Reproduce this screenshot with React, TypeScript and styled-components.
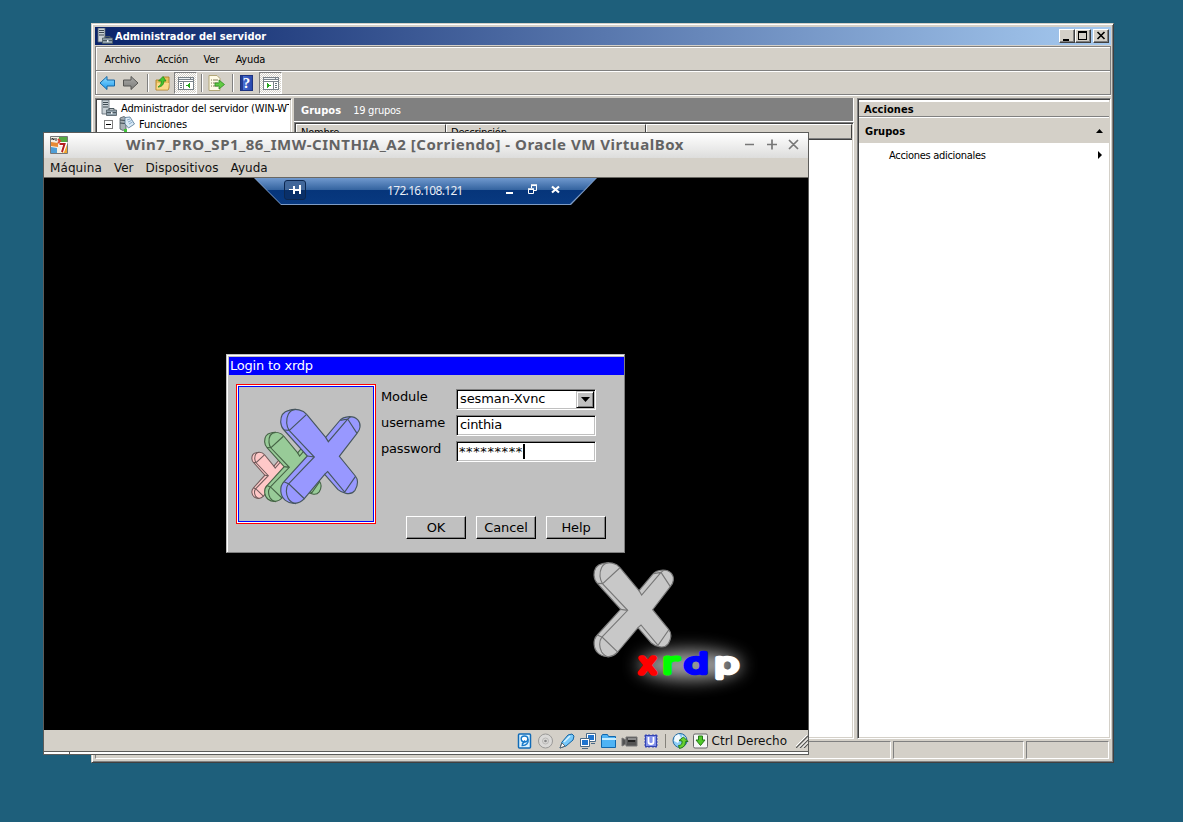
import React from "react";
import styled, { createGlobalStyle, css } from "styled-components";

const face = "#d4d0c8";
const tahoma = `"DejaVu Sans Condensed", "DejaVu Sans", "Noto Sans", sans-serif`;

const GlobalStyle = createGlobalStyle`
  * { box-sizing: border-box; }
  html, body { margin: 0; padding: 0; overflow: hidden; background: #1e5f7b; }
  svg { display: block; flex: none; }
`;

const Desktop = styled.div`
  position: relative;
  width: 1183px;
  height: 822px;
  overflow: hidden;
  background: #1e5f7b;
`;

/* ---------- Server manager ---------- */

const ServerWindow = styled.section`
  position: absolute;
  left: 91px;
  top: 23px;
  width: 1023px;
  height: 740px;
  display: flex;
  flex-direction: column;
  background: ${face};
  border: 1px solid;
  border-color: ${face} #404040 #404040 ${face};
  box-shadow: inset 1px 1px #fff, inset -1px -1px #808080;
  padding: 3px 2px 2px 3px;
  font: 11px ${tahoma};
  color: #000;
`;

const ServerTitle = styled.header`
  height: 18px;
  flex: none;
  display: flex;
  align-items: center;
  padding: 0 2px;
  background: linear-gradient(90deg, #0a246a, #a6caf0);
`;

const TitleText = styled.h1`
  margin: 0 0 0 2px;
  flex: 1;
  font: bold 11px ${tahoma};
  letter-spacing: 0.05px;
  color: #fff;
`;

const ClassicButton = styled.span<{ $gap?: number }>`
  width: 16px;
  height: 14px;
  margin-left: ${(p) => p.$gap ?? 0}px;
  background: ${face};
  border: 1px solid;
  border-color: #fff #404040 #404040 #fff;
  box-shadow: inset -1px -1px #808080;
`;

const Bars = styled.div`
  height: 49px;
  flex: none;
  margin: 1px 0;
  border: 1px solid #808080;
  box-shadow: inset 1px 1px #fff, 0 1px #fff;
`;

const MenuBar = styled.nav`
  height: 24px;
  padding: 2px 0 0 8.5px;
  display: flex;
  align-items: center;
  border-bottom: 1px solid #808080;
`;

const MenuItem = styled.span<{ $w: number }>`
  width: ${(p) => p.$w}px;
  letter-spacing: -0.15px;
  white-space: pre;
`;

const ToolBar = styled.div`
  height: 23px;
  display: flex;
  align-items: center;
  padding: 0 0 0 3px;
  border-top: 1px solid #fff;
`;

const Divider = styled.i<{ $before?: number; $after?: number }>`
  width: 2px;
  height: 18px;
  margin: 0 ${(p) => p.$after ?? 6}px 0 ${(p) => p.$before ?? 6}px;
  border-left: 1px solid #808080;
  border-right: 1px solid #fff;
`;

const Gap = styled.i<{ $w: number }>`
  width: ${(p) => p.$w}px;
`;

const Pressed = styled.span`
  width: 23px;
  height: 22px;
  display: grid;
  place-items: center;
  border: 1px solid;
  border-color: #808080 #fff #fff #808080;
  background: repeating-conic-gradient(#fff 0 25%, ${face} 0 50%) 0 0 / 2px 2px;
`;

const Panes = styled.main`
  height: 641px;
  margin-top: 2px;
  flex: none;
  display: flex;
`;

const sunken = css`
  border: 1px solid;
  border-color: #808080 #fff #fff #808080;
  box-shadow: inset 1px 1px #404040, inset -1px -1px ${face};
`;

const TreePane = styled.div`
  width: 197px;
  flex: none;
  ${sunken}
  background: #fff;
  padding: 1px 2px;
  overflow: hidden;
`;

const TreeRow = styled.div<{ $indent: number }>`
  height: 16px;
  width: 191px;
  overflow: hidden;
  display: flex;
  align-items: center;
  gap: 4px;
  padding-left: ${(p) => p.$indent}px;
  white-space: nowrap;
  letter-spacing: -0.17px;
`;

const Expander = styled.i`
  width: 9px;
  height: 9px;
  flex: none;
  margin-right: 2px;
  border: 1px solid #808080;
  background: linear-gradient(#000, #000) 50% 50% / 5px 1px no-repeat;
`;

const ListPane = styled.div`
  width: 560px;
  flex: none;
  margin-left: 2px;
  display: flex;
  flex-direction: column;
`;

const ListCaption = styled.div`
  height: 24px;
  flex: none;
  display: flex;
  align-items: center;
  gap: 12px;
  padding: 2px 0 0 7px;
  color: #fff;
  background: #808080;
  border: solid #fff;
  border-width: 0 1px 1px 0;
  letter-spacing: -0.25px;

  b {
    letter-spacing: 0.05px;
  }
`;

const List = styled.div`
  flex: 1;
  ${sunken}
  background: #fff;
  padding: 1px;
`;

const Columns = styled.div`
  height: 16px;
  display: flex;
  border-bottom: 1px solid #404040;
`;

const Column = styled.span<{ $w?: number }>`
  ${(p) => (p.$w ? `width: ${p.$w}px;` : "flex: 1;")}
  padding: 1px 0 0 4px;
  background: ${face};
  border: 1px solid;
  border-color: #fff #404040 #808080 #fff;
  letter-spacing: -0.2px;
`;

const ActionsPane = styled.aside`
  width: 254px;
  flex: none;
  margin-left: 3px;
  ${sunken}
  background: #fff;
  padding: 2px 1px;
`;

const ActionsHead = styled.div`
  height: 16px;
  padding-left: 5px;
  background: ${face};
  border-top: 1px solid #fff;
  border-bottom: 1px solid #808080;
  font-weight: bold;
  line-height: 15px;
  letter-spacing: 0.05px;
`;

const ActionsGroup = styled.div`
  height: 25px;
  margin-top: 1px;
  padding: 1px 6px 0 6px;
  display: flex;
  align-items: center;
  justify-content: space-between;
  background: ${face};
  font-weight: bold;
  letter-spacing: 0.05px;
`;

const ActionItem = styled.div`
  height: 24px;
  padding: 0 7px 0 30px;
  display: flex;
  align-items: center;
  justify-content: space-between;
  letter-spacing: -0.3px;
`;

const StatusBar = styled.footer`
  height: 18px;
  margin-top: 2px;
  flex: none;
  display: flex;
  gap: 2px;
  padding-right: 2px;
`;

const StatusCell = styled.span<{ $w?: number }>`
  ${(p) => (p.$w ? `width: ${p.$w}px;` : "flex: 1;")}
  border: 1px solid;
  border-color: #808080 #fff #fff #808080;
`;

/* ---------- VirtualBox ---------- */

const VmWindow = styled.section`
  position: absolute;
  left: 43px;
  top: 132px;
  width: 766px;
  height: 623px;
  display: flex;
  flex-direction: column;
  background: ${face};
  border: 1px solid #5c5c5a;
  font: 12px "DejaVu Sans", sans-serif;
  color: #111;
`;

const VmTitle = styled.header`
  height: 25px;
  flex: none;
  display: flex;
  align-items: center;
  padding: 0 8px 2px 6px;
  background: linear-gradient(#ffffff, #dddddc);
`;

const VmCaption = styled.h2`
  margin: -2px 0 0;
  padding-left: 58px;
  flex: 1;
  font: bold 15px "Noto Sans", "Open Sans", sans-serif;
  letter-spacing: 0.52px;
  color: #636363;
  white-space: nowrap;
`;

const VmMenu = styled.nav`
  height: 20px;
  flex: none;
  display: flex;
  align-items: center;
  gap: 12px;
  padding-left: 6px;
  border-bottom: 1px solid #6a6863;
`;

const VmMenuItem = styled.span<{ $space?: number }>`
  letter-spacing: ${(p) => p.$space ?? 0}px;
`;

const Screen = styled.div`
  position: relative;
  height: 552px;
  flex: none;
  background: #000;
`;

const VmStatus = styled.footer`
  height: 21px;
  flex: none;
  display: flex;
  align-items: center;
  justify-content: flex-end;
  gap: 5px;
`;

const HostKey = styled.span`
  margin: 0 4px 0 -2px;
  white-space: nowrap;
`;

const VmEdge = styled.div`
  height: 3px;
  border-top: 1px solid #5c5c5a;
  background: linear-gradient(90deg, transparent 25px, #5c5c5a 25px, #5c5c5a 26px, transparent 26px), #fff;
`;

/* ---------- Remote connection bar ---------- */

const ConnectionBar = styled.div`
  position: absolute;
  left: 210px;
  top: 0;
  width: 343px;
  height: 27px;
  clip-path: polygon(0 0, 100% 0, 317px 100%, 27px 100%);
  background: #7e9cc6;
`;

const ConnectionFill = styled.div`
  height: 26px;
  display: flex;
  align-items: center;
  clip-path: polygon(1px 0, 342px 0, 316px 100%, 27px 100%);
  background: linear-gradient(#7099ce 0, #33639f 12px, #06357a 12px, #083980 100%);
  color: #e8edf5;
`;

const Pin = styled.span`
  width: 22px;
  height: 20px;
  margin: -3px 0 0 30px;
  display: grid;
  place-items: center;
  border: 1px solid #0c2750;
  border-radius: 3px;
  background: linear-gradient(#41679a 0 50%, #0a3069 50%);
`;

const Address = styled.span`
  width: 112px;
  margin: -1px 0 0 81px;
  font: 12px "Noto Sans", sans-serif;
  letter-spacing: -0.67px;
`;

/* ---------- Login dialog ---------- */

const Login = styled.form`
  position: absolute;
  left: 182px;
  top: 176px;
  width: 399px;
  height: 199px;
  padding: 2px 0 0 2px;
  background: #c0c0c0;
  border: 1px solid;
  border-color: #c0c0c0 #808080 #808080 #c0c0c0;
  box-shadow: inset 1px 1px #fff;
  font: 13px "DejaVu Sans", sans-serif;
  letter-spacing: -0.1px;
  color: #000;
`;

const LoginTitle = styled.div`
  height: 18px;
  padding-left: 1px;
  line-height: 17px;
  letter-spacing: -0.22px;
  background: #0000ff;
  color: #fff;
`;

const LoginBody = styled.div`
  display: flex;
  gap: 5px;
  padding: 9px 0 0 7px;
`;

const Picture = styled.div`
  width: 140px;
  height: 140px;
  flex: none;
  border: 1px solid #f00;
  padding: 1px;
  background: #fff;
  & > div {
    height: 136px;
    border: 1px solid #00f;
    background: #c0c0c0;
  }
`;

const Fields = styled.div`
  display: flex;
  flex-direction: column;
  padding-top: 5px;
`;

const Field = styled.div`
  height: 26px;
  display: flex;
`;

const FieldLabel = styled.label<{ $space?: number }>`
  width: 75px;
  line-height: 15px;
  letter-spacing: ${(p) => p.$space ?? -0.1}px;
`;

const Input = styled.div`
  width: 140px;
  height: 21px;
  padding: 0 0 0 2px;
  display: flex;
  line-height: 18px;
  background: #fff;
  border: 1px solid;
  border-color: #808080 #fff #fff #808080;
  box-shadow: inset 1px 1px #000, inset -1px -1px #c0c0c0;
`;

const Value = styled.span<{ $space?: number }>`
  flex: 1;
  padding-left: 1px;
  letter-spacing: ${(p) => p.$space ?? -0.1}px;
`;

const Secret = styled.span`
  padding-left: 0;
  line-height: 19px;
  width: 64px;
  letter-spacing: 0.6px;
  white-space: nowrap;
`;

const Caret = styled.i`
  width: 2px;
  height: 15px;
  margin-top: 2px;
  background: #000;
`;

const DropButton = styled.span`
  width: 18px;
  height: 17px;
  margin: 1px 1px 0 0;
  display: grid;
  place-items: center;
  background: #c0c0c0;
  border: 1px solid;
  border-color: #c0c0c0 #000 #000 #c0c0c0;
  box-shadow: inset 1px 1px #fff, inset -1px -1px #808080;
`;

const Buttons = styled.div`
  display: flex;
  gap: 10px;
  margin: 49px 0 0 25px;
`;

const PushButton = styled.span`
  width: 60px;
  height: 23px;
  line-height: 21px;
  text-align: center;
  background: #c0c0c0;
  border: 1px solid;
  border-color: #fff #000 #000 #fff;
  box-shadow: inset -1px -1px #808080;
`;

const Brand = styled.svg`
  position: absolute;
  left: 536px;
  top: 372px;
`;

const BrandLetter = styled.text<{ $color: string }>`
  font: 200 82px "DejaVu Sans", sans-serif;
  fill: ${(p) => p.$color};
  stroke: ${(p) => p.$color};
  stroke-width: 5.8px;
  stroke-linejoin: round;
  stroke-linecap: round;
  vector-effect: non-scaling-stroke;
`;

/* ---------- Drawings ---------- */

function ServerIcon({ size = 16 }: { size?: number }) {
  return (
    <svg width={size} height={size} viewBox="0 0 16 16">
      <path d="M1 0h7v14H1z" fill="#c9d1d6" stroke="#59666e" strokeWidth=".8" />
      <path d="M2 2.500h5M2 4.500h5M2 7h5" stroke="#3f4b53" />
      <path d="M5.500 10h10v5.500h-10z" fill="#8fa0ab" stroke="#4b5961" strokeWidth=".8" />
      <path d="M8 10V8.500h5V10M6 12.500h9" fill="none" stroke="#4b5961" />
      <path d="M10 12h1.500v2H10z" fill="#eef3f5" />
    </svg>
  );
}

function RolesIcon() {
  return (
    <svg width="16" height="16" viewBox="0 0 16 16">
      <path d="M1 2l4-1.500L7 2v11l-3 1.500L1 13z" fill="#a7afb4" stroke="#4c585e" strokeWidth=".8" />
      <path d="M1 4l5 .5M1 7l5 .5" stroke="#3f4b53" />
      <path d="M6 1.500l5-.5 4.500 7-6 4L6 8z" fill="#dcebf7" stroke="#4e7392" strokeWidth=".8" />
      <path d="M8 4l3-1M9 6l3.500-1.500M10 8l3.500-2" stroke="#7fa4c4" strokeWidth=".9" />
      <path d="M5 13h3v3H5z" fill="#3fc43a" />
    </svg>
  );
}

function ArrowIcon({ forward = false }: { forward?: boolean }) {
  return (
    <svg width="17" height="16" viewBox="0 0 17 16">
      <defs>
        <linearGradient id={forward ? "af" : "ab"} x2="0" y2="1">
          <stop stopColor={forward ? "#a9a9a7" : "#8fdcff"} />
          <stop offset="1" stopColor={forward ? "#7d7d7b" : "#1f9bee"} />
        </linearGradient>
      </defs>
      <path
        transform={forward ? "matrix(-1 0 0 1 17 0)" : undefined}
        d="M1 8L8 1.500V5h7.500v6H8v3.500z"
        fill={`url(#${forward ? "af" : "ab"})`}
        stroke={forward ? "#555553" : "#1667a5"}
      />
    </svg>
  );
}

function FolderUpIcon() {
  return (
    <svg width="16" height="16" viewBox="0 0 16 16">
      <path d="M1 5h6l1-3h6v11l-1 2H1z" fill="#e9bf5c" stroke="#b07f26" strokeWidth=".9" />
      <path d="M2 8h12l-1 6.500H1.500z" fill="#fbd98a" />
      <path d="M3 12c2.500-1.500 3.500-3 3.300-6H3.500L8 1.500 11 6H8.800C9 9 7 12 3 12z" fill="#47c52f" stroke="#258a19" strokeWidth=".8" />
    </svg>
  );
}

function PaneIcon({ right = false }: { right?: boolean }) {
  return (
    <svg width="16" height="14" viewBox="0 0 16 14" shapeRendering="crispEdges">
      <path d="M0 1h16v13H0z" fill="#79828a" />
      <path d="M1 2h11v1H1zM13 2h2v1h-2z" fill="#eef1f3" />
      <path d="M1 4h14v1H1zM1 6h14v7H1z" fill="#fff" />
      <path d={right ? "M10 6h1v7h-1z" : "M5 6h1v7H5z"} fill="#79828a" />
      <path d={right ? "M12 7h2v1h-2zm0 2h2v1h-2zm0 2h2v1h-2z" : "M2 7h2v1H2zm0 2h2v1H2zm0 2h2v1H2z"} fill="#66747e" />
      <path d={right ? "M4 7l4 2.500L4 12z" : "M12 7L8 9.500l4 2.500z"} fill="#24a51d" />
    </svg>
  );
}

function ExportIcon() {
  return (
    <svg width="17" height="16" viewBox="0 0 17 16">
      <path d="M1 .5h8l3 3v12H1z" fill="#fffbe7" stroke="#b3a778" />
      <path d="M3 5h1m1 0h5M3 8h1m1 0h5M3 11h1m1 0h5" stroke="#817859" />
      <path d="M7 8h4V5l5.500 4.500L11 14v-3H7z" fill="#62cb43" stroke="#2f8c25" strokeWidth=".8" />
    </svg>
  );
}

const HelpIcon = styled.span`
  width: 13px;
  height: 16px;
  background: linear-gradient(90deg, #233d93 2px, #4a6fd2 2px, #2747ad);
  border: 1px solid #1d3380;
  color: #fff;
  font: bold 15px/14px "Liberation Serif", serif;
  text-align: center;
`;

function VmLogo() {
  return (
    <svg width="18" height="18" viewBox="0 0 18 18">
      <path d="M.5.5h17v17H.5z" fill="#f4efe3" stroke="#777" />
      <path d="M1 6l7 1v4l-7-1z" fill="#e98a34" />
      <path d="M1 11l6 1v5H1z" fill="#4f9ed6" />
      <path d="M9 1h8v7c-3 1-5-1-8 0z" fill="#55a942" />
      <path d="M12 9h5v8h-5z" fill="#f0a52c" />
      <path d="M2 4V2l2 2V2M6 2v3" stroke="#333" fill="none" />
      <path d="M9 8h6l-3 8" stroke="#fff" strokeWidth="4" fill="none" />
      <path d="M9.500 8h5l-2.500 8" stroke="#b51f20" strokeWidth="2" fill="none" />
      <path d="M8 3l2 2-2 2" stroke="#d84632" strokeWidth="2" fill="none" />
    </svg>
  );
}

function VmControls() {
  return (
    <svg width="56" height="14" viewBox="0 0 56 14" stroke="#777" strokeWidth="1.700" fill="none">
      <path d="M1 6.500h9M23 6.500h10M28 1.500v10M45 2l9 9m0-9l-9 9" />
    </svg>
  );
}

function VmStatusIcons() {
  return (
    <svg width="192" height="18" viewBox="0 0 192 18">
      <rect x="1.500" y="2" width="12" height="14" rx="1" fill="#ddf3ff" stroke="#116bb7" strokeWidth="1.500" />
      <ellipse cx="7.500" cy="7" rx="3.300" ry="3" fill="#fff" stroke="#1679ca" strokeWidth="1.400" />
      <path d="M11 7c1 4-2 7-6.500 6.500M5 12.500l3-4" fill="none" stroke="#1679ca" strokeWidth="1.400" />
      <circle cx="28.500" cy="9" r="7" fill="#dad9d7" stroke="#9a9997" />
      <circle cx="28.500" cy="9" r="3" fill="none" stroke="#b9b8b6" />
      <circle cx="28.500" cy="9" r="1.300" fill="#888" />
      <path d="M43 16l2-6 6-7 4-1 2 2-1 4-7 6z" fill="#76c8fa" stroke="#1263a1" />
      <path d="M43 16l2-5 3 3z" fill="#fff" stroke="#555" strokeWidth=".8" />
      <path d="M47 10l6-6" stroke="#d8f3ff" strokeWidth="1.500" />
      <path d="M69.500 1.500h9v8h-9z" fill="#fff" stroke="#4a6a88" />
      <path d="M71 3h6v5h-6z" fill="#1f74cf" />
      <path d="M63.500 6.500h9v8h-9z" fill="#fff" stroke="#4a6a88" />
      <path d="M65 8h6v5h-6z" fill="#1f74cf" />
      <path d="M65 16.500h6M74 11.500h4" stroke="#4a6a88" />
      <path d="M84.500 15.500V4l1-1.500h5l1 2h7v11z" fill="#4fb3f4" stroke="#1167ad" />
      <path d="M85 7h14" stroke="#c6ecff" strokeWidth="2" />
      <path d="M105 6l4 2v4l-4 2zM109 5h11v9h-11z" fill="#535353" stroke="#777" />
      <path d="M111 7h8" stroke="#c7c7c7" />
      <path d="M111 9h7" stroke="#222" strokeWidth="2" />
      <path d="M127 4h14M127 7h14M127 10h14M127 13h14M129 2v14M132 2v14M136 2v14M139 2v14" stroke="#4655c1" />
      <rect x="128.500" y="3.500" width="11" height="11" fill="#8290eb" stroke="#3344b0" />
      <path d="M131.500 5v5q0 2 2.500 2t2.500-2V5" fill="none" stroke="#fff" strokeWidth="1.800" />
      <path d="M148.500 2v14" stroke="#85827b" />
      <circle cx="163" cy="8.500" r="7" fill="#8bcdf6" stroke="#286a9c" />
      <path d="M158 4l4-2 2 4-3 5-4-2zM165 3l4 3-3 3z" fill="#f1faff" />
      <path d="M162 8.500L166.500 5l4.500 4.500h-2.500c0 4-2 6-6 7l-1-3c2.500 0 4-1.500 3.500-4.500z" fill="#69d12e" stroke="#247a1c" />
      <rect x="176.500" y="2" width="14" height="14" rx="1.500" fill="#f6f6f6" stroke="#666" />
      <path d="M181.500 4h4v4h2.500l-4.500 5.500L179 8h2.500z" fill="#4fc928" stroke="#257b17" />
    </svg>
  );
}

interface CrossProps {
  fill: string;
  stroke: string;
  transform?: string;
  weight?: number;
}

// The logo's block letter: silhouette first, then the edges of its front face.
function Cross({ fill, stroke, transform, weight = 3.4 }: CrossProps) {
  return (
    <g transform={transform} fill={fill} stroke={stroke} strokeWidth={weight}>
      <path d="M167 216C167 196 177 184 192 181C212 175 234 179 245 193L302 262L343 213Q352 201 374 200C396 200 407 215 405 231Q404 241 396 250L343 319L391 378C401 390 398 407 390 421Q380 434 363 430Q348 427 339 419L299 373L238 446C222 464 197 464 181 451C165 438 162 410 177 395L247 318L177 240Q168 231 167 216Z" />
      <path
        fill="none"
        d="M212 178C190 180 184 201 185 219Q186 232 193 242L268 321L190 402C181 414 183 433 190 446Q198 459 213 461M247 318L268 321M177 240L193 241L244 194M177 395L192 402L239 447M302 262L310 275L368 207L346 211M368 207L396 250M299 373L308 365L359 426L391 380M368 207L376 201"
      />
    </g>
  );
}

function XrdpPicture() {
  return (
    <svg width="134" height="134" viewBox="42 111 402 402">
      <Cross fill="#ffc8c8" stroke="#725c5c" weight={6.5} transform="translate(80 307) scale(.49) translate(-166 -178)" />
      <Cross fill="#98cb98" stroke="#456345" weight={4.5} transform="translate(118 247) scale(.735) translate(-166 -178)" />
      <Cross fill="#9898ff" stroke="#46565f" />
    </svg>
  );
}

const brandLetters = [
  { char: "x", x: 176, stretch: 1.07, color: "#f00" },
  { char: "r", x: 247, stretch: 1.4, color: "#0f0" },
  { char: "d", x: 311, stretch: 1.45, color: "#00f" },
  { char: "p", x: 402, stretch: 1.47, color: "#fff" },
];

function XrdpBrand() {
  return (
    <Brand width="200" height="150" viewBox="0 0 600 450">
      <defs>
        <filter id="halo" x="-60%" y="-150%" width="220%" height="400%">
          <feGaussianBlur stdDeviation="26" />
        </filter>
      </defs>
      <ellipse cx="330" cy="345" rx="155" ry="44" fill="#a0a0a0" filter="url(#halo)" />
      <Cross fill="#c8c8c8" stroke="#777" transform="translate(-125 -140)" />
      {brandLetters.map((l) => (
        <BrandLetter key={l.char} $color={l.color} transform={`translate(${l.x} 368) scale(${l.stretch} 1)`}>
          {l.char}
        </BrandLetter>
      ))}
    </Brand>
  );
}

/* ---------- Composition ---------- */

function ServerManager() {
  return (
    <ServerWindow>
      <ServerTitle>
        <ServerIcon />
        <TitleText>Administrador del servidor</TitleText>
        <ClassicButton>
          <svg width="14" height="12"><path d="M3 9h6v2H3z" fill="#000" /></svg>
        </ClassicButton>
        <ClassicButton>
          <svg width="14" height="12" shapeRendering="crispEdges"><path d="M2 1h9v9H2zM3 3v6h7V3z" fillRule="evenodd" /></svg>
        </ClassicButton>
        <ClassicButton $gap={2}>
          <svg width="14" height="12"><path d="M3.500 2l7 7m0-7l-7 7" stroke="#000" strokeWidth="1.600" /></svg>
        </ClassicButton>
      </ServerTitle>
      <Bars>
        <MenuBar>
          <MenuItem $w={52}>Archivo</MenuItem>
          <MenuItem $w={47}>Acción</MenuItem>
          <MenuItem $w={32}>Ver</MenuItem>
          <MenuItem $w={40}>Ayuda</MenuItem>
        </MenuBar>
        <ToolBar>
          <ArrowIcon />
          <Gap $w={6} />
          <ArrowIcon forward />
          <Divider $before={8} />
          <FolderUpIcon />
          <Gap $w={3} />
          <Pressed><PaneIcon /></Pressed>
          <Divider $before={4} $after={5} />
          <ExportIcon />
          <Divider $before={7} />
          <HelpIcon>?</HelpIcon>
          <Gap $w={6} />
          <Pressed><PaneIcon right /></Pressed>
        </ToolBar>
      </Bars>
      <Panes>
        <TreePane>
          <TreeRow $indent={3}><ServerIcon />Administrador del servidor (WIN-WT</TreeRow>
          <TreeRow $indent={6}><Expander /><RolesIcon />Funciones</TreeRow>
        </TreePane>
        <ListPane>
          <ListCaption><b>Grupos</b><span>19 grupos</span></ListCaption>
          <List>
            <Columns>
              <Column $w={150}>Nombre</Column>
              <Column $w={200}>Descripción</Column>
              <Column />
            </Columns>
          </List>
        </ListPane>
        <ActionsPane>
          <ActionsHead>Acciones</ActionsHead>
          <ActionsGroup>
            Grupos
            <svg width="7" height="4"><path d="M0 4l3.500-4L7 4z" /></svg>
          </ActionsGroup>
          <ActionItem>
            Acciones adicionales
            <svg width="4" height="8"><path d="M0 0l4 4-4 4z" /></svg>
          </ActionItem>
        </ActionsPane>
      </Panes>
      <StatusBar>
        <StatusCell />
        <StatusCell $w={131} />
        <StatusCell $w={83} />
      </StatusBar>
    </ServerWindow>
  );
}

function LoginDialog() {
  return (
    <Login>
      <LoginTitle>Login to xrdp</LoginTitle>
      <LoginBody>
        <Picture><div><XrdpPicture /></div></Picture>
        <Fields>
          <Field>
            <FieldLabel>Module</FieldLabel>
            <Input>
              <Value>sesman-Xvnc</Value>
              <DropButton><svg width="9" height="5"><path d="M0 0h9L4.500 5z" /></svg></DropButton>
            </Input>
          </Field>
          <Field>
            <FieldLabel>username</FieldLabel>
            <Input><Value $space={-0.3}>cinthia</Value></Input>
          </Field>
          <Field>
            <FieldLabel $space={-0.2}>password</FieldLabel>
            <Input><Secret>*********</Secret><Caret /></Input>
          </Field>
          <Buttons>
            <PushButton>OK</PushButton>
            <PushButton>Cancel</PushButton>
            <PushButton>Help</PushButton>
          </Buttons>
        </Fields>
      </LoginBody>
    </Login>
  );
}

function VirtualMachine() {
  return (
    <VmWindow>
      <VmTitle>
        <VmLogo />
        <VmCaption>Win7_PRO_SP1_86_IMW-CINTHIA_A2 [Corriendo] - Oracle VM VirtualBox</VmCaption>
        <VmControls />
      </VmTitle>
      <VmMenu>
        <VmMenuItem $space={0.1}>Máquina</VmMenuItem>
        <VmMenuItem>Ver</VmMenuItem>
        <VmMenuItem $space={0.08}>Dispositivos</VmMenuItem>
        <VmMenuItem>Ayuda</VmMenuItem>
      </VmMenu>
      <Screen>
        <ConnectionBar>
          <ConnectionFill>
            <Pin>
              <svg width="12" height="10" fill="#fff"><path d="M0 4h4V1h2v3h4V0h2v9h-2V6H6v3H4V5H0z" /></svg>
            </Pin>
            <Address>172.16.108.121</Address>
            <svg width="65" height="16" viewBox="0 0 65 16" fill="none" stroke="#fff">
              <path d="M7 10h7" strokeWidth="2" />
              <path d="M29.500 6.500h5v4h-5zM32.500 5V2.500h5v5H35" />
              <path d="M29 6h6M32 2h6" strokeWidth="1.500" />
              <path d="M53 3.500l7 6m0-6l-7 6" strokeWidth="2.200" />
            </svg>
          </ConnectionFill>
        </ConnectionBar>
        <LoginDialog />
        <XrdpBrand />
      </Screen>
      <VmStatus>
        <VmStatusIcons />
        <HostKey>Ctrl Derecho</HostKey>
        <svg width="12" height="14" viewBox="0 0 12 14">
          <path d="M0 14L12 2M4 14l8-8M8 14l4-4" stroke="#555" strokeWidth="1.200" />
          <path d="M-1 13L11 1M3 13.500l9-9M7 13.500l5-5" stroke="#fff" />
        </svg>
      </VmStatus>
      <VmEdge />
    </VmWindow>
  );
}

export default function App() {
  return (
    <>
      <GlobalStyle />
      <Desktop>
        <ServerManager />
        <VirtualMachine />
      </Desktop>
    </>
  );
}
